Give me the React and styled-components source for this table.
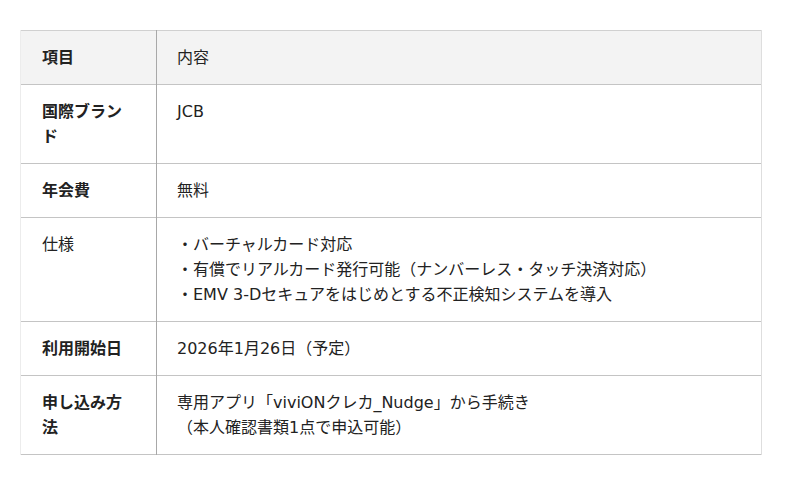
import React from "react";
import styled, { createGlobalStyle } from "styled-components";

const GlobalStyle = createGlobalStyle`
  body {
    margin: 0;
    background: #ffffff;
    font-family: "DejaVu Sans", "Noto Sans CJK JP", sans-serif;
    color: #222222;
  }
`;

const rows = [
  { label: "国際ブランド", lines: ["JCB"] },
  { label: "年会費", lines: ["無料"] },
  {
    label: "仕様",
    plain: true,
    lines: [
      "・バーチャルカード対応",
      "・有償でリアルカード発行可能（ナンバーレス・タッチ決済対応）",
      "・EMV 3-Dセキュアをはじめとする不正検知システムを導入",
    ],
  },
  { label: "利用開始日", lines: ["2026年1月26日（予定）"] },
  {
    label: "申し込み方法",
    lines: ["専用アプリ「viviONクレカ_Nudge」から手続き", "（本人確認書類1点で申込可能）"],
  },
];

export default function App() {
  return (
    <Page>
      <GlobalStyle />
      <Table>
        <colgroup>
          <col style={{ width: 136 }} />
          <col />
        </colgroup>
        <tbody>
          <Row $head>
            <Label>項目</Label>
            <Value>内容</Value>
          </Row>
          {rows.map(({ label, lines, plain }) => (
            <Row key={label}>
              <Label $plain={plain}>{label}</Label>
              <Value>
                {lines.map((line) => (
                  <div key={line}>{line}</div>
                ))}
              </Value>
            </Row>
          ))}
        </tbody>
      </Table>
    </Page>
  );
}

const Page = styled.div`
  padding: 30px 38px 30px 20px;
`;

const Table = styled.table`
  width: 742px;
  border-collapse: collapse;
  table-layout: fixed;
  font-size: 16px;
  line-height: 25px;
`;

const Row = styled.tr`
  background: ${(props) => (props.$head ? "#f3f3f3" : "#ffffff")};
  border-top: 1px solid #d0d0d0;
  border-bottom: 1px solid #c4c4c4;
`;

const Label = styled.td`
  padding: 14px 21px 14px 21px;
  vertical-align: top;
  font-weight: ${(props) => (props.$plain ? 400 : 700)};
  border-left: 1px solid #ececec;
  border-right: 1px solid #a8a8a8;
`;

const Value = styled.td`
  padding: 14px 21px 14px 20px;
  vertical-align: top;
  border-right: 1px solid #dedede;
`;
